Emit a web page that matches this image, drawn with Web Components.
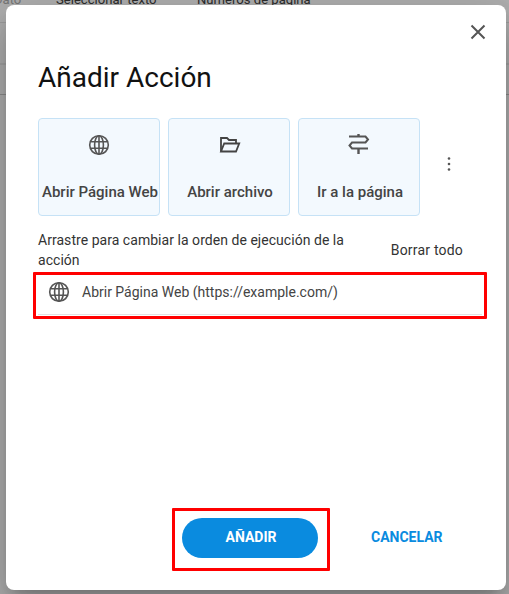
<!DOCTYPE html>
<html lang="es">
<head>
<meta charset="utf-8">
<title>Añadir Acción</title>
<style>
html, body { margin: 0; height: 100%; }
body { font-family: Roboto, "Liberation Sans", sans-serif; overflow: hidden; }
</style>
</head>
<body>
<page-backdrop>
  <action-dialog heading="Añadir Acción">
    <action-card slot="cards" label="Abrir Página Web" icon="globe"></action-card>
    <action-card slot="cards" label="Abrir archivo" icon="folder"></action-card>
    <action-card slot="cards" label="Ir a la página" icon="sign"></action-card>
    <red-mark slot="rows" class="row-mark">
      <action-row label="Abrir Página Web (https://example.com/)"></action-row>
    </red-mark>
  </action-dialog>
</page-backdrop>

<script>
const ICONS = {
    globe: `<svg width="24" height="24" viewBox="0 0 24 24" fill="none" stroke="#555" stroke-width="1.6"><circle cx="12" cy="12" r="9.3"/><ellipse cx="12" cy="12" rx="4.4" ry="9.3"/><path d="M12 2.700v18.600M3.600 8.800h16.800M3.600 15.200h16.800"/></svg>`,
    folder: `<svg width="24" height="24" viewBox="0 0 24 24" fill="none" stroke="#444" stroke-width="1.8"><path d="M4 18.500V5h6l2 2h7v3.500"/><path d="M4 18.500h15l3.200-8H7.200z"/></svg>`,
    sign: `<svg width="24" height="24" viewBox="0 0 24 24" fill="none" stroke="#555" stroke-width="2"><path d="M11.500 1v2.500M11.500 15.500V21" stroke-width="2.400"/><path d="M2 3.500h16.500l2.500 3-2.500 3H5l-2.500 3 2.500 3h16"/></svg>`
};

class PageBackdrop extends HTMLElement {
    constructor() {
        super();
        this.attachShadow({ mode: "open" });
        this.shadowRoot.innerHTML = `
        <style>
        :host { display: block; position: relative; width: 509px; height: 594px; background: #b0b0b0; overflow: hidden; }
        .top { display: flex; height: 22px; box-sizing: content-box; border-bottom: 1px solid #9f9f9f; font-size: 13.1px; line-height: 14px; color: #2c2c2c; }
        .top span { margin-top: -7px; white-space: nowrap; }
        .top .a { width: 56px; color: #777; text-indent: -6px; }
        .top .b { width: 141px; }
        .band { height: 40px; border-bottom: 2px solid #a4a4a4; }
        .band2 { height: 29px; border-bottom: 1px solid #8c8c8c; }
        .stage { position: absolute; left: 6px; top: 5px; }
        </style>
        <div class="top"><span class="a">Dato</span><span class="b">Seleccionar texto</span><span>Números de página</span></div>
        <div class="band"></div>
        <div class="band2"></div>
        <div class="stage"><slot></slot></div>
        `;
    }
}

// recuadro rojo alrededor de lo que se quiere resaltar
class RedMark extends HTMLElement {
    constructor() {
        super();
        this.attachShadow({ mode: "open" });
        this.shadowRoot.innerHTML = `
        <style>
        :host { display: block; box-sizing: border-box; border: 3px solid #f00; border-radius: 1px; }
        </style>
        <slot></slot>
        `;
    }
}

class ActionDialog extends HTMLElement {
    constructor() {
        super();
        this.attachShadow({ mode: "open" });
    }
    connectedCallback() {
        this.shadowRoot.innerHTML = `
        <style>
        :host { display: flex; flex-direction: column; box-sizing: border-box; width: 500px; height: 585px; background: #fff; border-radius: 8px; padding: 0 24px 0 32px; color: #333; position: relative; box-shadow: 0 11px 15px -7px rgba(0,0,0,.2), 0 24px 38px 3px rgba(0,0,0,.14), 0 9px 46px 8px rgba(0,0,0,.12); }
        .close { position: absolute; right: 18px; top: 17px; width: 20px; height: 20px; }
        h1 { margin: 55px 0 0; font-weight: 400; font-size: 28px; line-height: 36px; color: #111; }
        .cards { display: flex; align-items: center; margin-top: 22px; }
        .cards ::slotted(action-card) { margin-right: 8px; }
        .more { margin: -6px 0 0 11px; width: 20px; height: 20px; }
        .hint { display: flex; align-items: center; justify-content: space-between; margin-top: 14px; letter-spacing: .04px; }
        .hint p { margin: 0; width: 320px; font-size: 14px; line-height: 20px; }
        .hint span { font-size: 14px; margin-right: 19px; letter-spacing: .2px; }
        .rows { margin: 2px 0 0 -5px; width: 454px; }
        .foot { margin-top: auto; margin-bottom: 19px; display: flex; align-items: center; padding-left: 134px; gap: 42px; }
        .foot red-mark { padding: 7px 9px 10px 7px; }
        .ok { display: block; width: 136px; height: 40px; border: 0; border-radius: 20px; background: #0a8bdf; color: #fff; font: 700 14px Roboto, sans-serif; padding: 0 0 2px 2px; }
        .cancel { border: 0; background: none; color: #0a8bdf; font: 700 14px Roboto, sans-serif; padding: 0 1px 5px 0; margin-left: -1px; }
        </style>
        <svg class="close" viewBox="0 0 20 20" stroke="#555" stroke-width="2"><path d="M3.500 3.500l13 13M16.500 3.500l-13 13"/></svg>
        <h1>${this.getAttribute("heading")}</h1>
        <div class="cards"><slot name="cards"></slot>
          <svg class="more" viewBox="0 0 20 20" fill="#555"><circle cx="10" cy="4.500" r="1.300"/><circle cx="10" cy="10" r="1.300"/><circle cx="10" cy="15.500" r="1.300"/></svg>
        </div>
        <div class="hint"><p>Arrastre para cambiar la orden de ejecución de la acción</p><span>Borrar todo</span></div>
        <div class="rows"><slot name="rows"></slot></div>
        <div class="foot"><red-mark><button class="ok">AÑADIR</button></red-mark><button class="cancel">CANCELAR</button></div>
        `;
    }
}

class ActionCard extends HTMLElement {
    constructor() {
        super();
        this.attachShadow({ mode: "open" });
    }
    connectedCallback() {
        this.shadowRoot.innerHTML = `
        <style>
        :host { display: flex; flex-direction: column; align-items: center; box-sizing: border-box; width: 122px; height: 98px; background: #f3f9fe; border: 1px solid #c6e2f6; border-radius: 4px; padding-top: 14px; color: #444; }
        svg { display: block; }
        span { margin: 25px 0 0 2px; font-size: 15px; font-weight: 500; line-height: 20px; white-space: nowrap; }
        </style>
        ${ICONS[this.getAttribute("icon")]}
        <span>${this.getAttribute("label")}</span>
        `;
    }
}

class ActionRow extends HTMLElement {
    constructor() {
        super();
        this.attachShadow({ mode: "open" });
    }
    connectedCallback() {
        this.shadowRoot.innerHTML = `
        <style>
        :host { display: flex; align-items: center; box-sizing: border-box; height: 40px; margin: 0 2px 1px; padding: 0 0 5px 9px; border-bottom: 1px solid #e2e2e2; gap: 11px; font-size: 14px; color: #444; }
        </style>
        ${ICONS.globe}
        <span>${this.getAttribute("label")}</span>
        `;
    }
}

customElements.define('page-backdrop', PageBackdrop);
customElements.define('red-mark', RedMark);
customElements.define('action-dialog', ActionDialog);
customElements.define('action-card', ActionCard);
customElements.define('action-row', ActionRow);
</script>
</body>
</html>
